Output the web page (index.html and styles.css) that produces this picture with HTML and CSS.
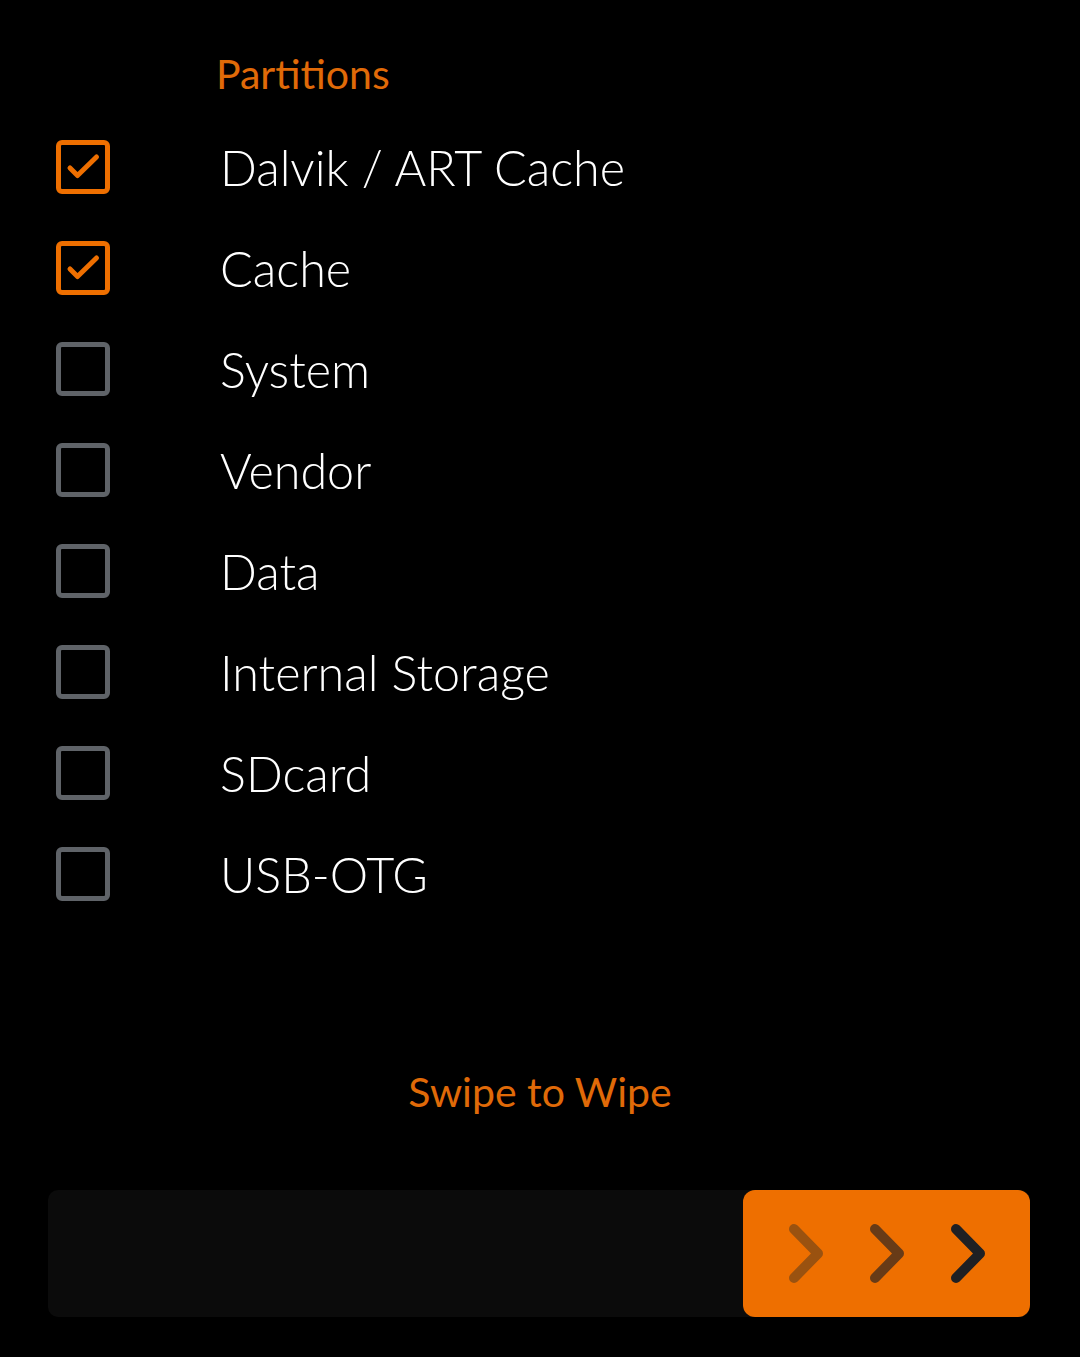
FILE: index.html
```html
<!DOCTYPE html>
<html>
<head>
<meta charset="utf-8">
<link rel="stylesheet" href="styles.css">
</head>
<body>
<div class="page">
  <div class="title">Partitions</div>
  <div class="list">
    <div class="row"><span class="box checked"><svg viewBox="0 0 54 54"><polyline points="14,28 21.5,35.5 40.5,17"/></svg></span><span class="label">Dalvik / ART Cache</span></div>
    <div class="row"><span class="box checked"><svg viewBox="0 0 54 54"><polyline points="14,28 21.5,35.5 40.5,17"/></svg></span><span class="label">Cache</span></div>
    <div class="row"><span class="box"></span><span class="label">System</span></div>
    <div class="row"><span class="box"></span><span class="label">Vendor</span></div>
    <div class="row"><span class="box"></span><span class="label">Data</span></div>
    <div class="row"><span class="box"></span><span class="label">Internal Storage</span></div>
    <div class="row"><span class="box"></span><span class="label">SDcard</span></div>
    <div class="row"><span class="box"></span><span class="label">USB-OTG</span></div>
  </div>
  <div class="swipe-label">Swipe to Wipe</div>
  <div class="track">
    <div class="handle">
      <svg viewBox="0 0 287 127" width="287" height="127">
        <polyline class="c1" points="51,39 75,63.5 51,88"/>
        <polyline class="c2" points="132,39 156,63.5 132,88"/>
        <polyline class="c3" points="213,39 237,63.5 213,88"/>
      </svg>
    </div>
  </div>
</div>
</body>
</html>
```
FILE: styles.css
```css
html, body {
  margin: 0;
  padding: 0;
  background: #000;
}
body {
  font-family: Lato, "Noto Sans", sans-serif;
  color: #fff;
}
.page {
  width: 1080px;
  height: 1357px;
  overflow: hidden;
}
.title {
  height: 116px;
  box-sizing: border-box;
  padding-left: 216px;
  padding-top: 51px;
  font-size: 41px;
  line-height: 46px;
  color: #e06a08;
}
.list {
  display: flex;
  flex-direction: column;
}
.row {
  height: 101px;
  display: flex;
  align-items: center;
}
.box {
  width: 54px;
  height: 54px;
  margin-left: 56px;
  box-sizing: border-box;
  border: 5px solid #5f6368;
  border-radius: 6px;
  position: relative;
  flex: none;
}
.box.checked {
  border-color: #ee6f00;
}
.box svg {
  position: absolute;
  left: -5px;
  top: -5px;
  width: 54px;
  height: 54px;
}
.box svg polyline {
  fill: none;
  stroke: #ee6f00;
  stroke-width: 5;
  stroke-linecap: round;
  stroke-linejoin: round;
}
.label {
  margin-left: 110px;
  font-size: 48.5px;
  font-weight: 300;
  line-height: 60px;
}
.swipe-label {
  margin-top: 142px;
  text-align: center;
  font-size: 41px;
  line-height: 52px;
  color: #e06a08;
}
.track {
  margin: 72px 50px 0 48px;
  height: 127px;
  background: #0b0b0b;
  border-radius: 10px;
  display: flex;
  justify-content: flex-end;
}
.handle {
  width: 287px;
  height: 127px;
  background: #ee6f00;
  border-radius: 12px;
}
.handle svg {
  display: block;
}
.handle polyline {
  fill: none;
  stroke-width: 10;
  stroke-linecap: round;
  stroke-linejoin: round;
}
.handle .c1 { stroke: #9a5210; }
.handle .c2 { stroke: #683b17; }
.handle .c3 { stroke: #1f2023; }
```
